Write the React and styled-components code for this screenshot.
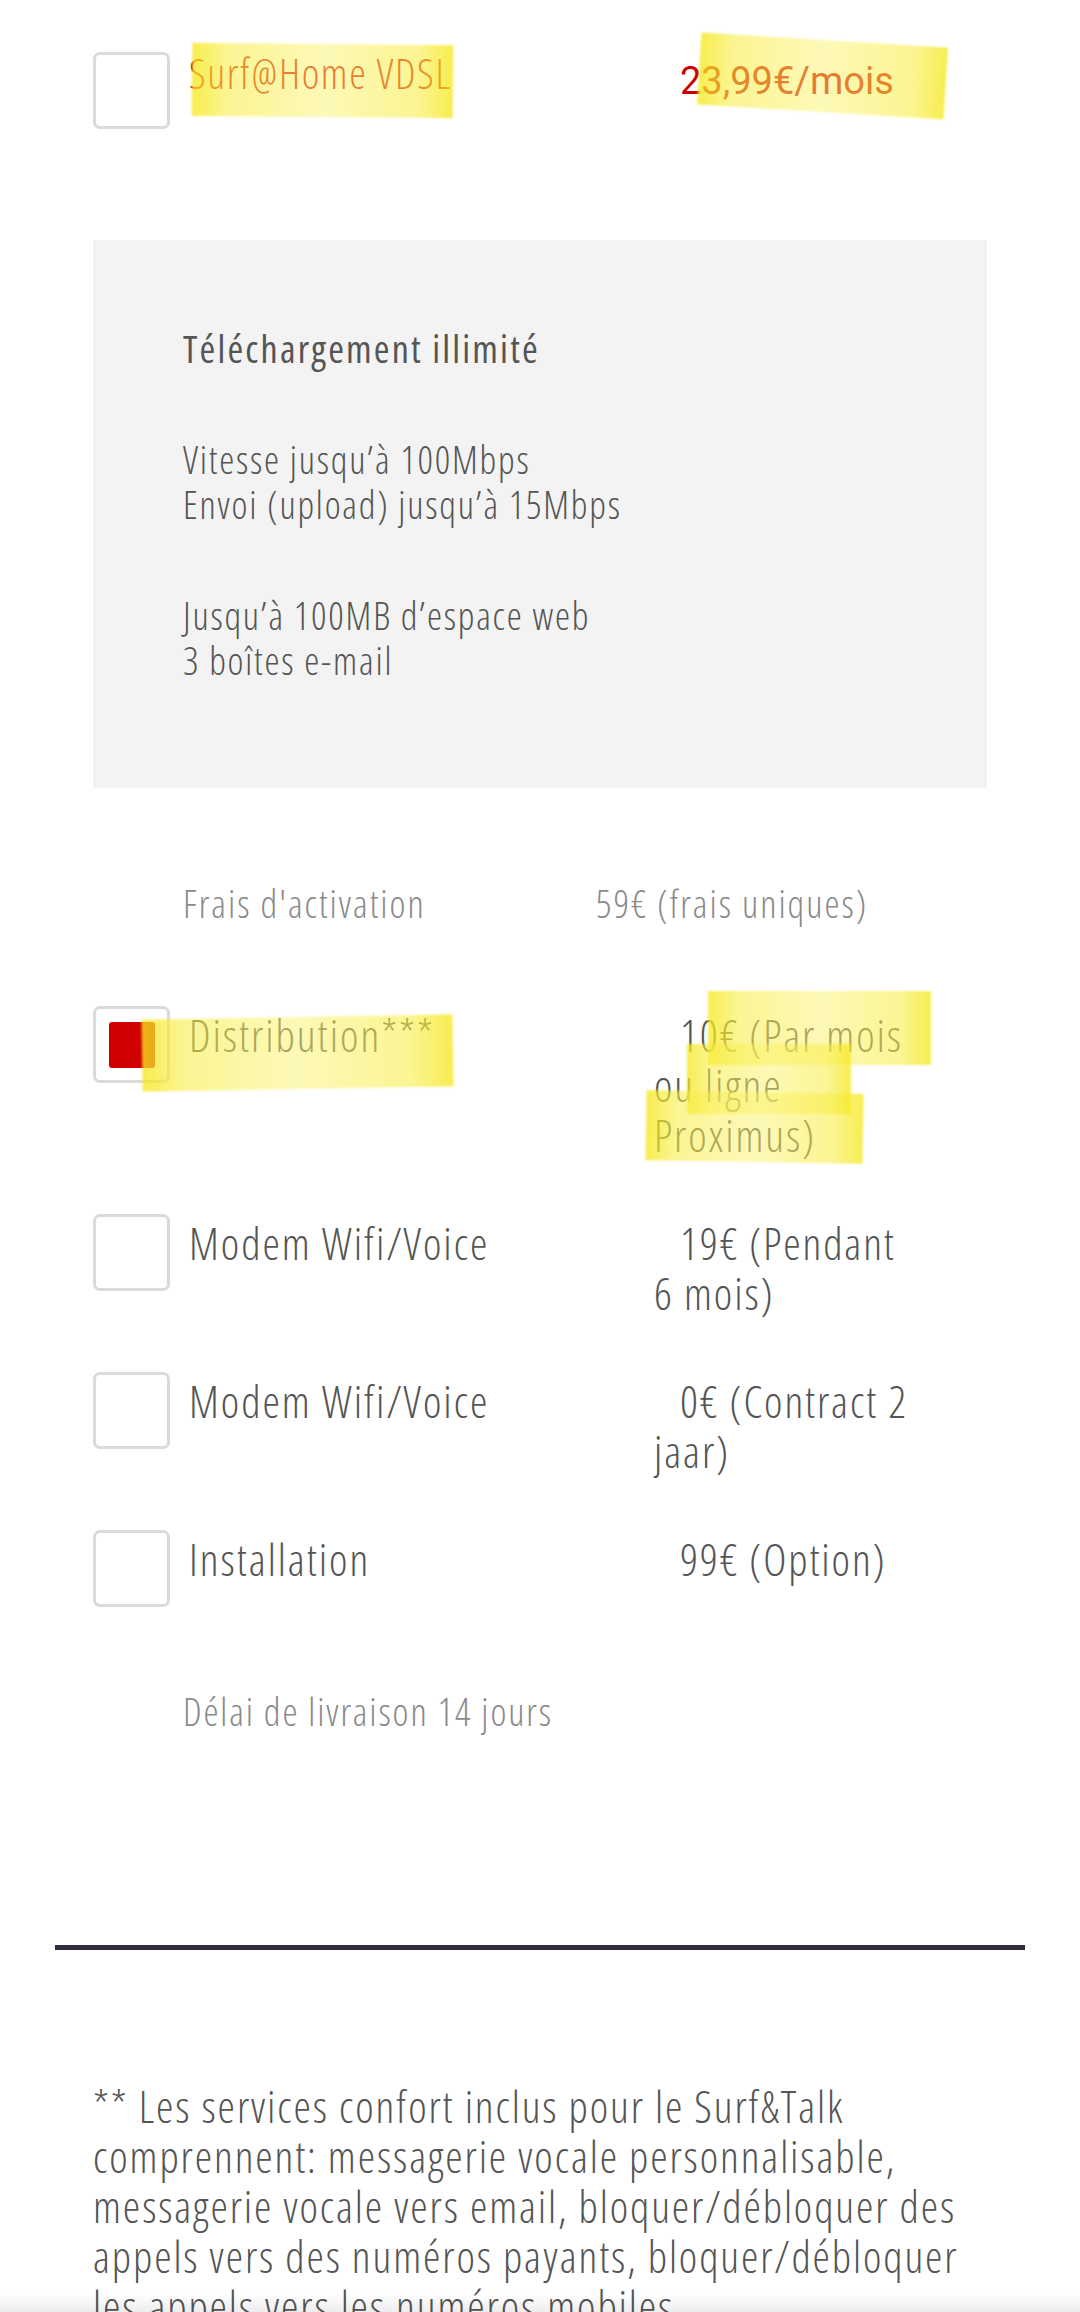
import React from 'react';
import styled, { createGlobalStyle } from 'styled-components';

const GlobalStyle = createGlobalStyle`
  html, body {
    margin: 0;
    padding: 0;
    background: #fff;
  }
  body {
    font-family: "Open Sans", "DejaVu Sans Condensed", sans-serif;
    font-stretch: 75%;
    font-weight: 300;
    color: #555;
  }
`;

const Page = styled.div`
  padding: 52px 93px 0;
`;

const OptionRow = styled.div`
  position: relative;
  display: grid;
  grid-template-columns: 96px 465px 1fr;
  align-items: start;
  margin-bottom: ${(p) => p.$after || 0}px;
`;

const Checkbox = styled.div`
  box-sizing: border-box;
  width: 77px;
  height: 77px;
  border: 3px solid #dadada;
  border-radius: 7px;
  background: #fff;
  display: flex;
  align-items: center;
  justify-content: center;
`;

const Tick = styled.div`
  width: 46px;
  height: 46px;
  border-radius: 3px;
  background: #d10000;
`;

const Label = styled.div`
  margin-top: ${(p) => (p.$product ? 2 : 4)}px;
  font-size: ${(p) => (p.$product ? 42 : 44)}px;
  line-height: ${(p) => (p.$product ? 38 : 50)}px;
  letter-spacing: ${(p) => (p.$product ? 1.6 : 2)}px;
  color: ${(p) => (p.$product ? '#d10000' : '#555')};
  white-space: nowrap;
`;

const Price = styled.div`
  margin-top: 4px;
  font-size: 44px;
  line-height: 50px;
  letter-spacing: 1.9px;
  color: #555;
  text-indent: 26px;
  white-space: nowrap;
`;

const MonthlyPrice = styled.div`
  margin-top: 4px;
  padding-left: 26px;
  font-family: Roboto, "Liberation Sans", sans-serif;
  font-stretch: 100%;
  font-weight: 400;
  font-size: 38px;
  line-height: 50px;
  color: #cc0000;
  white-space: nowrap;
`;

const Highlight = styled.span`
  position: absolute;
  left: ${(p) => p.$x}px;
  top: ${(p) => p.$y}px;
  width: ${(p) => p.$w}px;
  height: ${(p) => p.$h}px;
  transform: rotate(${(p) => p.$r || 0}deg);
  background: linear-gradient(
    90deg,
    rgba(246, 232, 30, 0.78) 0%,
    rgba(248, 238, 70, 0.58) 14%,
    rgba(250, 243, 110, 0.5) 50%,
    rgba(248, 238, 70, 0.58) 86%,
    rgba(246, 232, 30, 0.78) 100%
  );
  filter: blur(0.8px);
  pointer-events: none;
`;

const FeatureBox = styled.div`
  background: #f3f3f3;
  margin-top: 111px;
  padding: 86px 90px 105px;
  font-size: 38px;
  line-height: 45px;
  letter-spacing: 1.8px;
  color: #555;
`;

const FeatureTitle = styled.div`
  font-weight: 500;
  letter-spacing: 2.2px;
  color: #555;
`;

const FeatureGroup = styled.div`
  margin-top: 66px;
`;

const InfoRow = styled.div`
  display: grid;
  grid-template-columns: 413px 1fr;
  padding-left: 90px;
  margin: 93px 0 80px;
  font-size: 38px;
  line-height: 45px;
  letter-spacing: 2px;
  color: #8a8a8a;
`;

const Note = styled.div`
  padding-left: 90px;
  margin-top: 82px;
  font-size: 38px;
  line-height: 45px;
  letter-spacing: 1.9px;
  color: #8a8a8a;
`;

const Divider = styled.hr`
  border: 0;
  height: 5px;
  margin: 211px 55px 0;
  background: #342b3f;
`;

const Footer = styled.div`
  padding: 131px 93px 40px;
  font-size: 44px;
  line-height: 50px;
  letter-spacing: 1.9px;
  color: #555;
`;

const Line = styled.div`
  white-space: nowrap;
`;

const BottomFade = styled.div`
  position: fixed;
  left: 0;
  right: 0;
  bottom: 0;
  height: 18px;
  background: linear-gradient(to bottom, rgba(0, 0, 0, 0), rgba(0, 0, 0, 0.07));
  pointer-events: none;
`;

const options = [
  {
    label: 'Distribution***',
    price: ['10€ (Par mois', 'ou ligne', 'Proximus)'],
    checked: true,
    marks: [
      { x: 49, y: 11, w: 311, h: 72, r: -1 },
      { x: 615, y: -15, w: 223, h: 74 },
      { x: 594, y: 38, w: 164, h: 70 },
      { x: 553, y: 86, w: 217, h: 70, r: 1 },
    ],
  },
  { label: 'Modem Wifi/Voice', price: ['19€ (Pendant', '6 mois)'] },
  { label: 'Modem Wifi/Voice', price: ['0€ (Contract 2', 'jaar)'] },
  { label: 'Installation', price: ['99€ (Option)'] },
];

const footerLines = [
  '** Les services confort inclus pour le Surf&Talk',
  'comprennent: messagerie vocale personnalisable,',
  'messagerie vocale vers email, bloquer/débloquer des',
  'appels vers des numéros payants, bloquer/débloquer',
  'les appels vers les numéros mobiles.',
];

const App = () => (
  <>
    <GlobalStyle />
    <Page>
      <OptionRow>
        <Checkbox />
        <Label $product>Surf@Home VDSL</Label>
        <MonthlyPrice>23,99€/mois</MonthlyPrice>
        <Highlight $x={99} $y={-8} $w={261} $h={73} $r={0.5} />
        <Highlight $x={606} $y={-12} $w={247} $h={72} $r={3.5} />
      </OptionRow>

      <FeatureBox>
        <FeatureTitle>Téléchargement illimité</FeatureTitle>
        <FeatureGroup>
          <div>Vitesse jusqu’à 100Mbps</div>
          <div>Envoi (upload) jusqu’à 15Mbps</div>
        </FeatureGroup>
        <FeatureGroup>
          <div>Jusqu’à 100MB d’espace web</div>
          <div>3 boîtes e-mail</div>
        </FeatureGroup>
      </FeatureBox>

      <InfoRow>
        <span>Frais d'activation</span>
        <span>59€ (frais uniques)</span>
      </InfoRow>

      {options.map((opt, i) => (
        <OptionRow key={i} $after={i === options.length - 1 ? 0 : 54}>
          <Checkbox>{opt.checked && <Tick />}</Checkbox>
          <Label>{opt.label}</Label>
          <Price>
            {opt.price.map((l, j) => (
              <div key={j} style={j > 0 ? { textIndent: 0 } : undefined}>{l}</div>
            ))}
          </Price>
          {(opt.marks || []).map((m, j) => (
            <Highlight key={j} $x={m.x} $y={m.y} $w={m.w} $h={m.h} $r={m.r} />
          ))}
        </OptionRow>
      ))}

      <Note>Délai de livraison 14 jours</Note>
    </Page>

    <Divider />

    <Footer>
      {footerLines.map((l, i) => (
        <Line key={i}>{l}</Line>
      ))}
    </Footer>
    <BottomFade />
  </>
);

export default App;
